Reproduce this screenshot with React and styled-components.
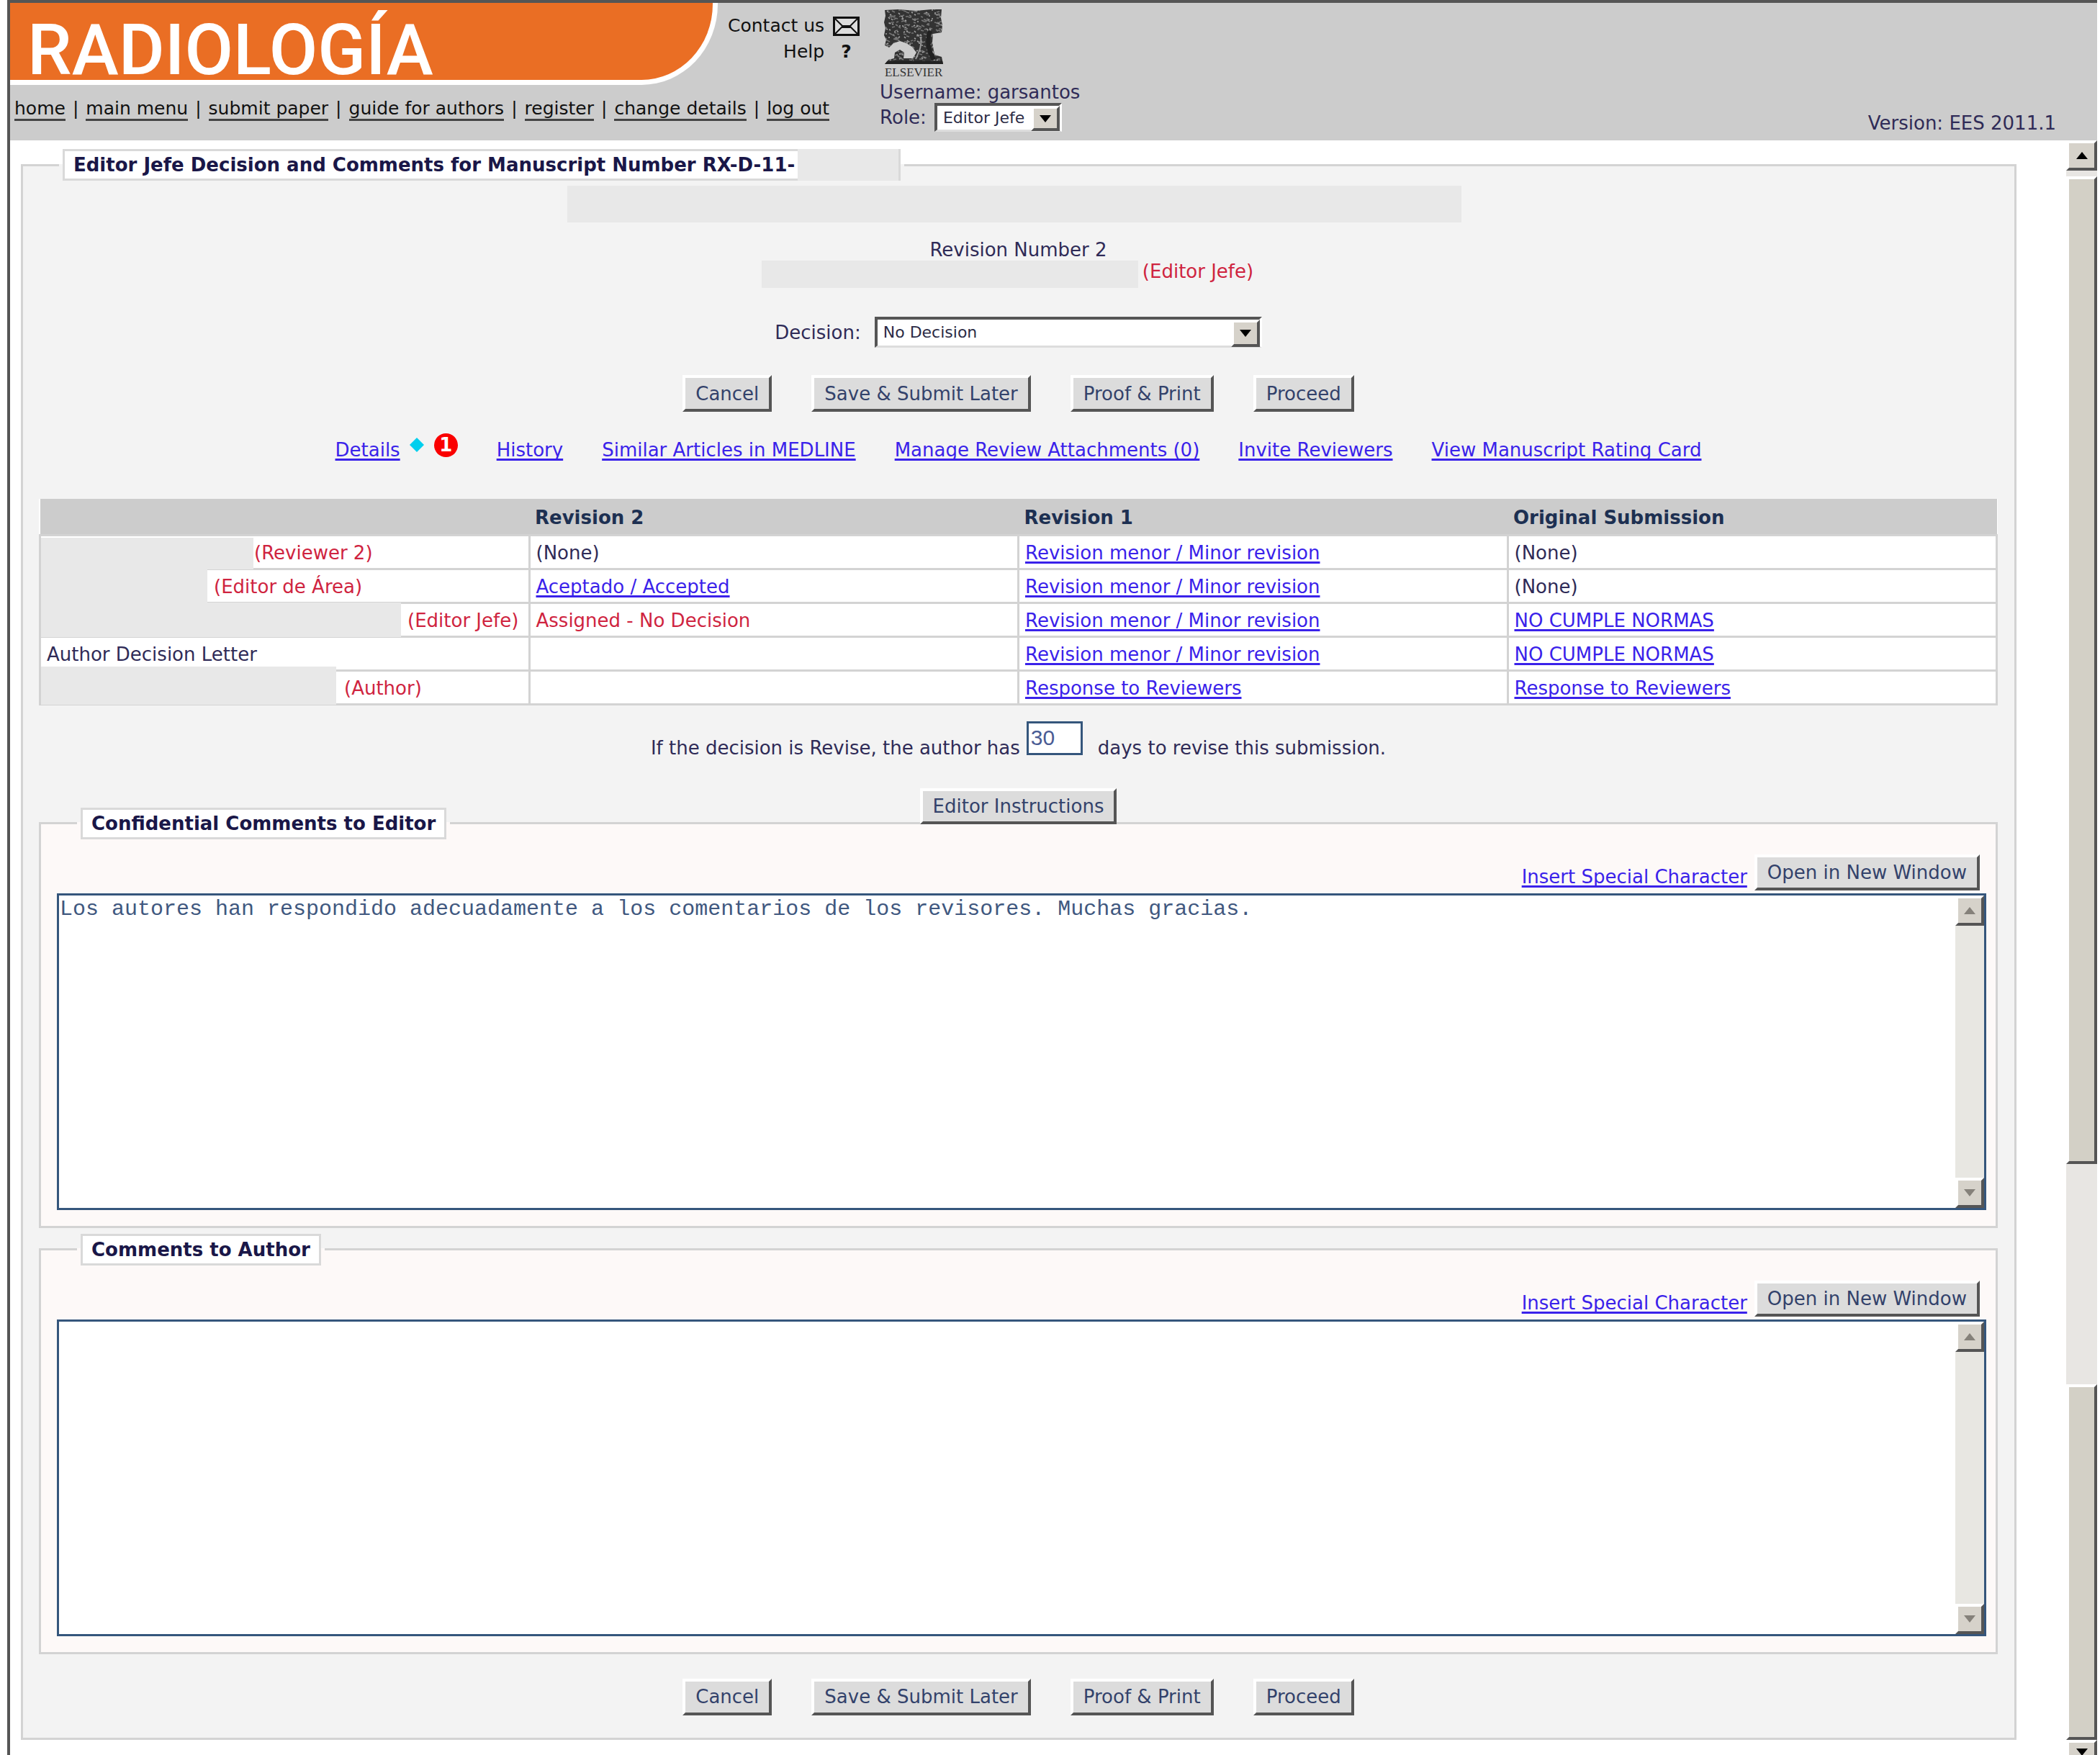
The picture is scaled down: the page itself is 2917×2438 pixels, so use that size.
import React, { useState } from "react";
import styled, { createGlobalStyle, css } from "styled-components";

const GlobalStyle = createGlobalStyle`
  * {
    box-sizing: border-box;
  }
  body {
    margin: 0;
    background: #fff;
    color: #2f2b57;
    font-family: "DejaVu Sans", Verdana, sans-serif;
    font-size: 26px;
    line-height: 30px;
  }
  button, input, select, textarea {
    font: inherit;
    margin: 0;
    border-radius: 0;
  }
`;

const Page = styled.div`
  min-height: 100vh;
  margin: 0 4px 0 10px;
  border-top: 4px solid #555;
  border-left: 4px solid #555;
  display: flex;
  flex-direction: column;
  overflow: hidden;
`;

/* header */

const Header = styled.header`
  display: flex;
  min-height: 191px;
  background: #ccc;
`;

const HeaderLeft = styled.div`
  display: flex;
  flex-direction: column;
`;

const BannerRow = styled.div`
  display: flex;
`;

const Banner = styled.h1`
  margin: 0;
  width: 983px;
  height: 114px;
  padding: 17px 0 0 24px;
  background: #ea6e24;
  border: solid #fff;
  border-width: 0 7px 7px 0;
  border-bottom-right-radius: 106px 112px;
  color: #fff;
  font: 500 98px/98px Roboto, "Liberation Sans", sans-serif;
`;

const ContactList = styled.div`
  display: grid;
  grid-template-columns: auto 37px;
  grid-auto-rows: 36px;
  column-gap: 12px;
  padding: 14px 0 0 14px;
  align-items: center;
  justify-items: end;
  color: #111;
  font-size: 25px;
  white-space: nowrap;
`;

const PlainLink = styled.a`
  color: inherit;
  text-decoration: none;
`;

const HelpMark = styled.span`
  justify-self: center;
  font-weight: bold;
`;

const Nav = styled.nav`
  display: flex;
  gap: 10px;
  margin-top: 19px;
  padding-left: 6px;
  color: #111;
  font-size: 25px;
  line-height: 28px;
  white-space: nowrap;
`;

const NavLink = styled.a`
  color: inherit;
  text-decoration: none;
  border-bottom: 3px solid #444;
`;

const Brand = styled.div`
  display: flex;
  flex-direction: column;
  margin-left: 28px;
  padding-top: 9px;
`;

const BrandLogo = styled.div`
  display: flex;
  flex-direction: column;
  align-items: center;
  width: 82px;
  margin: 0 0 4px 6px;
  gap: 2px;
  color: #333;
  font: 17px/17px "Liberation Serif", serif;
`;

const RoleRow = styled.div`
  display: flex;
  align-items: center;
  gap: 11px;
`;

const Version = styled.div`
  margin: auto 57px 9px auto;
`;

/* form controls */

const bevel = css`
  border: solid;
  border-width: 4px;
  border-color: #fff #555 #555 #fff;
`;

const SelectBox = styled.span`
  position: relative;
  display: inline-flex;
  width: ${(p) => p.$width};
  height: ${(p) => p.$height};
`;

const StyledSelect = styled.select`
  appearance: none;
  width: 100%;
  height: 100%;
  padding: 0 44px 0 8px;
  background: #fff;
  border: solid;
  border-width: 4px 4px 3px 4px;
  border-color: #555 #fff #ddd #555;
  color: #2b2b45;
  font-size: 22px;
  line-height: 26px;
`;

const SelectArrow = styled.span`
  position: absolute;
  top: 4px;
  right: 3px;
  bottom: 1px;
  width: 40px;
  display: flex;
  align-items: center;
  justify-content: center;
  background: #d6d2ca;
  pointer-events: none;
  ${bevel}
`;

const Button = styled.button`
  ${bevel}
  height: ${(p) => (p.$small ? "50px" : "51px")};
  padding: 0 14px;
  background: #dcdcdc;
  color: #33426b;
  white-space: nowrap;
`;

const Link = styled.a`
  color: #3a22ea;
  text-decoration: underline;
  text-decoration-thickness: 3px;
  text-underline-offset: 3px;
  text-decoration-skip-ink: none;
`;

const DaysInput = styled.input`
  width: 78px;
  height: 47px;
  margin: 0 21px 5px 9px;
  padding: 0 3px;
  border: 3px solid #35567c;
  background: #fff;
  color: #4a5c94;
  font-family: "Liberation Sans", Arial, sans-serif;
  font-size: 30px;
`;

/* panels */

const Body = styled.div`
  display: flex;
  flex: 1;
`;

const Content = styled.main`
  flex: 1;
  min-width: 0;
  padding: 12px 69px 22px 15px;
`;

const Panel = styled.fieldset`
  min-width: 0;
  margin: 0;
  padding: 0 23px 31px 22px;
  border: 3px solid #d3d3d3;
  background: #f3f3f3;
`;

const InnerPanel = styled(Panel)`
  margin-top: ${(p) => p.$top};
  padding: 0 13px 22px 22px;
  background: #fdf9f8;
`;

const Legend = styled.legend`
  margin-left: 28px;
  padding: 0 5px;
`;

const LegendBox = styled.span`
  display: flex;
  height: 44px;
  padding: 0 12px;
  padding-right: ${(p) => (p.$flush ? "0" : "12px")};
  gap: 4px;
  align-items: center;
  background: #fff;
  border: 3px solid #d9d9d9;
  color: #1a1748;
  font-weight: bold;
  white-space: nowrap;
`;

const Redacted = styled.span`
  flex: none;
  width: ${(p) => p.$width};
  height: ${(p) => p.$height};
  background: #e8e8e8;
`;

const CellRedacted = styled(Redacted)`
  align-self: flex-end;
  margin: -12px ${(p) => p.$gap} -2px -8px;
`;

const CenterRow = styled.div`
  display: flex;
  justify-content: center;
  align-items: ${(p) => p.$align || "center"};
  gap: ${(p) => p.$gap || "0"};
  margin-top: ${(p) => p.$top};
  padding-right: ${(p) => p.$trail || "0"};
  position: relative;
`;

const Red = styled.span`
  color: #cf2440;
`;

const DetailsGroup = styled.span`
  display: flex;
  align-items: center;
  gap: 13px;
`;

const Marks = styled.span`
  display: flex;
  align-items: center;
  gap: 14px;
  height: 30px;
  padding-bottom: 14px;
`;

const Table = styled.table`
  width: 100%;
  margin-top: 53px;
  border-collapse: collapse;
  table-layout: fixed;
  background: #fff;
`;

const Th = styled.th`
  height: 50px;
  padding: 4px 8px 0;
  background: #ccc;
  border-bottom: 0;
  color: #1d3052;
  text-align: left;
`;

const Td = styled.td`
  height: 47px;
  padding: 2px 8px 0;
  border: 3px solid #d3d3d3;
`;

const CellContent = styled.div`
  display: flex;
  align-items: center;
  height: 42px;
  white-space: nowrap;
`;

const PanelTools = styled.div`
  display: flex;
  justify-content: flex-end;
  align-items: flex-end;
  gap: 10px;
  margin: 21px 9px 4px 0;

  a {
    margin-bottom: 4px;
  }
`;

const EditorBox = styled.div`
  display: flex;
  height: 440px;
  border: 3px solid #35567c;
  background: #fff;
`;

const TextArea = styled.textarea`
  flex: 1;
  min-width: 0;
  padding: 2px 0 0 1px;
  border: 0;
  outline: 0;
  resize: none;
  overflow: hidden;
  background: transparent;
  color: #40587f;
  font-family: "Liberation Mono", "Courier New", monospace;
  font-size: 30px;
  line-height: 34px;
`;

/* scroll bars */

const InnerScroll = styled.div`
  display: flex;
  flex-direction: column;
  justify-content: space-between;
  width: 40px;
  background: #e8e7e2;
`;

const ScrollButton = styled.button`
  ${bevel}
  flex: none;
  display: flex;
  justify-content: center;
  align-items: ${(p) => (p.$cut ? "flex-end" : "center")};
  width: 100%;
  height: ${(p) => (p.$cut ? "22px" : "42px")};
  border-bottom-width: ${(p) => (p.$cut ? "0" : "4px")};
  padding: 0;
  overflow: hidden;
  background: #d6d2ca;
`;

const PageScroll = styled.div`
  display: flex;
  flex-direction: column;
  width: 43px;
  background: #e8e6e3;
`;

const Thumb = styled.div`
  ${bevel}
  flex: ${(p) => p.$size} 1 0;
  margin-top: ${(p) => p.$top || "0"};
  background: #d3d0c6;
`;

const TrackGap = styled.div`
  flex: 308 1 0;
`;

const Arrow = ({ up, color = "#000" }) => (
  <svg width="16" height="10" viewBox="0 0 16 10" aria-hidden="true">
    <path d={up ? "M0 10L8 0L16 10Z" : "M0 0L8 10L16 0Z"} fill={color} />
  </svg>
);

const Envelope = () => (
  <svg width="37" height="27" viewBox="0 0 37 27" aria-hidden="true">
    <rect x="1.5" y="1.5" width="34" height="24" fill="#ddd" stroke="#111" strokeWidth="3" />
    <path d="M3 3L13 13H24L34 3M3 24L13 14M34 24L24 14" fill="none" stroke="#111" strokeWidth="2" />
    <path d="M12 14H25" stroke="#111" strokeWidth="4" />
  </svg>
);

// engraving-like flecks over the tree, same pattern on every render
const flecks = Array.from({ length: 300 }, (_, i) => ({
  x: (i * 37 + ((i * i) % 11)) % 80,
  y: (i * 23 + ((i * i) % 7)) % 74,
  w: 1 + (i % 3),
  tone: i % 3 ? "#777" : "#a5a5a5",
}));

const Tree = () => (
  <svg width="82" height="77" viewBox="0 0 82 77" aria-hidden="true">
    <defs>
      <clipPath id="treeShape">
        <path d="M1 1L20 0L44 2L66 0L80 0L79 12L81 22L80 32L68 34L67 46L70 63L80 66L82 76H1L6 70L14 68L15 60L22 56L28 60L27 68L40 68L45 60L39 52L31 47L22 44L13 47L7 53L1 50L3 42L0 36L2 26L0 18L2 9Z" />
      </clipPath>
    </defs>
    <g clipPath="url(#treeShape)">
      <rect width="82" height="77" fill="#333" />
      {flecks.map((f, i) => (
        <path
          key={i}
          d={`M${f.x} ${f.y}l${f.w + 1} ${(i % 4) - 1}`}
          stroke={f.tone}
          strokeWidth="1.6"
        />
      ))}
      <path d="M0 74H82" stroke="#222" strokeWidth="5" />
      <path d="M64 30C59 43 61 56 69 70" stroke="#222" strokeWidth="6" fill="none" />
      <path d="M51 38C53 50 49 58 44 69" stroke="#999" strokeWidth="2" fill="none" />
    </g>
  </svg>
);

const Diamond = () => (
  <svg width="20" height="20" viewBox="0 0 20 20" aria-hidden="true">
    <path d="M10 0L20 10L10 20L0 10Z" fill="#00cfee" />
  </svg>
);

const Badge = styled.span`
  display: flex;
  align-items: center;
  justify-content: center;
  width: 33px;
  height: 33px;
  border-radius: 50%;
  background: #fa0000;
  color: #fff;
  font-weight: bold;
`;

const navItems = [
  "home",
  "main menu",
  "submit paper",
  "guide for authors",
  "register",
  "change details",
  "log out",
];

const minor = "Revision menor / Minor revision";

const rows = [
  { hidden: ["295px", "44px"], gap: "1px", who: "(Reviewer 2)", cells: ["(None)", minor, "(None)"] },
  { hidden: ["231px", "48px"], gap: "9px", who: "(Editor de Área)", cells: ["Aceptado / Accepted", minor, "(None)"] },
  { hidden: ["500px", "48px"], gap: "9px", who: "(Editor Jefe)", cells: ["Assigned - No Decision", minor, "NO CUMPLE NORMAS"] },
  { label: "Author Decision Letter", cells: ["", minor, "NO CUMPLE NORMAS"] },
  { hidden: ["410px", "53px"], gap: "11px", who: "(Author)", cells: ["", "Response to Reviewers", "Response to Reviewers"] },
];

const CellValue = ({ value }) => {
  if (!value || value === "(None)") return value;
  if (value.startsWith("Assigned")) return <Red>{value}</Red>;
  return <Link href="#">{value}</Link>;
};

const Select = ({ id, width, height, option }) => (
  <SelectBox $width={width} $height={height}>
    <StyledSelect id={id} defaultValue={option}>
      <option>{option}</option>
    </StyledSelect>
    <SelectArrow>
      <Arrow />
    </SelectArrow>
  </SelectBox>
);

const Actions = ({ top }) => (
  <CenterRow $top={top} $gap="55px">
    <Button type="button">Cancel</Button>
    <Button type="button">Save &amp; Submit Later</Button>
    <Button type="button">Proof &amp; Print</Button>
    <Button type="button">Proceed</Button>
  </CenterRow>
);

const CommentPanel = ({ title, top, initial }) => {
  const [text, setText] = useState(initial);

  return (
    <InnerPanel $top={top}>
      <Legend>
        <LegendBox>{title}</LegendBox>
      </Legend>
      <PanelTools>
        <Link href="#">Insert Special Character</Link>
        <Button type="button" $small>
          Open in New Window
        </Button>
      </PanelTools>
      <EditorBox>
        <TextArea
          aria-label={title}
          spellCheck={false}
          value={text}
          onChange={(e) => setText(e.target.value)}
        />
        <InnerScroll>
          <ScrollButton type="button" aria-label="Scroll up">
            <Arrow up color="#85817a" />
          </ScrollButton>
          <ScrollButton type="button" aria-label="Scroll down">
            <Arrow color="#85817a" />
          </ScrollButton>
        </InnerScroll>
      </EditorBox>
    </InnerPanel>
  );
};

const App = () => {
  const [days, setDays] = useState("30");

  return (
    <>
      <GlobalStyle />
      <Page>
        <Header>
          <HeaderLeft>
            <BannerRow>
              <Banner>RADIOLOGÍA</Banner>
              <ContactList>
                <PlainLink href="#">Contact us</PlainLink>
                <Envelope />
                <PlainLink href="#">Help</PlainLink>
                <HelpMark>?</HelpMark>
              </ContactList>
            </BannerRow>
            <Nav>
              {navItems.map((item, i) => (
                <React.Fragment key={item}>
                  {i > 0 && <span>|</span>}
                  <NavLink href="#">{item}</NavLink>
                </React.Fragment>
              ))}
            </Nav>
          </HeaderLeft>
          <Brand>
            <BrandLogo>
              <Tree />
              ELSEVIER
            </BrandLogo>
            <span>Username: garsantos</span>
            <RoleRow>
              <label htmlFor="role">Role:</label>
              <Select id="role" width="177px" height="40px" option="Editor Jefe" />
            </RoleRow>
          </Brand>
          <Version>Version: EES 2011.1</Version>
        </Header>

        <Body>
          <Content>
            <Panel>
              <Legend>
                <LegendBox $flush>
                  Editor Jefe Decision and Comments for Manuscript Number RX-D-11-
                  <Redacted $width="140px" $height="44px" />
                </LegendBox>
              </Legend>

              <CenterRow $top="7px" $trail="12px">
                <Redacted $width="1242px" $height="51px" />
              </CenterRow>
              <CenterRow $top="23px">Revision Number 2</CenterRow>
              <CenterRow $top="0" $gap="6px" $align="flex-start" $trail="30px">
                <Redacted $width="523px" $height="38px" />
                <Red>(Editor Jefe)</Red>
              </CenterRow>
              <CenterRow $top="40px" $gap="19px">
                <label htmlFor="decision">Decision:</label>
                <Select id="decision" width="538px" height="43px" option="No Decision" />
              </CenterRow>

              <Actions top="38px" />

              <CenterRow $top="38px" $gap="54px">
                <DetailsGroup>
                  <Link href="#">Details</Link>
                  <Marks>
                    <Diamond />
                    <Badge>1</Badge>
                  </Marks>
                </DetailsGroup>
                <Link href="#">History</Link>
                <Link href="#">Similar Articles in MEDLINE</Link>
                <Link href="#">Manage Review Attachments (0)</Link>
                <Link href="#">Invite Reviewers</Link>
                <Link href="#">View Manuscript Rating Card</Link>
              </CenterRow>

              <Table>
                <thead>
                  <tr>
                    <Th aria-label="Role" />
                    <Th>Revision 2</Th>
                    <Th>Revision 1</Th>
                    <Th>Original Submission</Th>
                  </tr>
                </thead>
                <tbody>
                  {rows.map((row, i) => (
                    <tr key={i}>
                      <Td>
                        <CellContent>
                          {row.hidden && (
                            <CellRedacted
                              $width={row.hidden[0]}
                              $height={row.hidden[1]}
                              $gap={row.gap}
                            />
                          )}
                          {row.who ? <Red>{row.who}</Red> : row.label}
                        </CellContent>
                      </Td>
                      {row.cells.map((value, j) => (
                        <Td key={j}>
                          <CellValue value={value} />
                        </Td>
                      ))}
                    </tr>
                  ))}
                </tbody>
              </Table>

              <CenterRow $top="22px" $align="flex-end">
                <label htmlFor="days">If the decision is Revise, the author has</label>
                <DaysInput id="days" value={days} onChange={(e) => setDays(e.target.value)} />
                <span>days to revise this submission.</span>
              </CenterRow>
              <CenterRow $top="41px">
                <Button type="button" $small>
                  Editor Instructions
                </Button>
              </CenterRow>

              <CommentPanel
                title="Confidential Comments to Editor"
                top="-23px"
                initial="Los autores han respondido adecuadamente a los comentarios de los revisores. Muchas gracias."
              />
              <CommentPanel title="Comments to Author" top="8px" initial="" />

              <Actions top="34px" />
            </Panel>
          </Content>

          <PageScroll>
            <ScrollButton type="button" aria-label="Scroll page up">
              <Arrow up />
            </ScrollButton>
            <Thumb $size={1372} $top="8px" />
            <TrackGap />
            <Thumb $size={488} />
            <ScrollButton type="button" aria-label="Scroll page down" $cut>
              <Arrow />
            </ScrollButton>
          </PageScroll>
        </Body>
      </Page>
    </>
  );
};

export default App;
